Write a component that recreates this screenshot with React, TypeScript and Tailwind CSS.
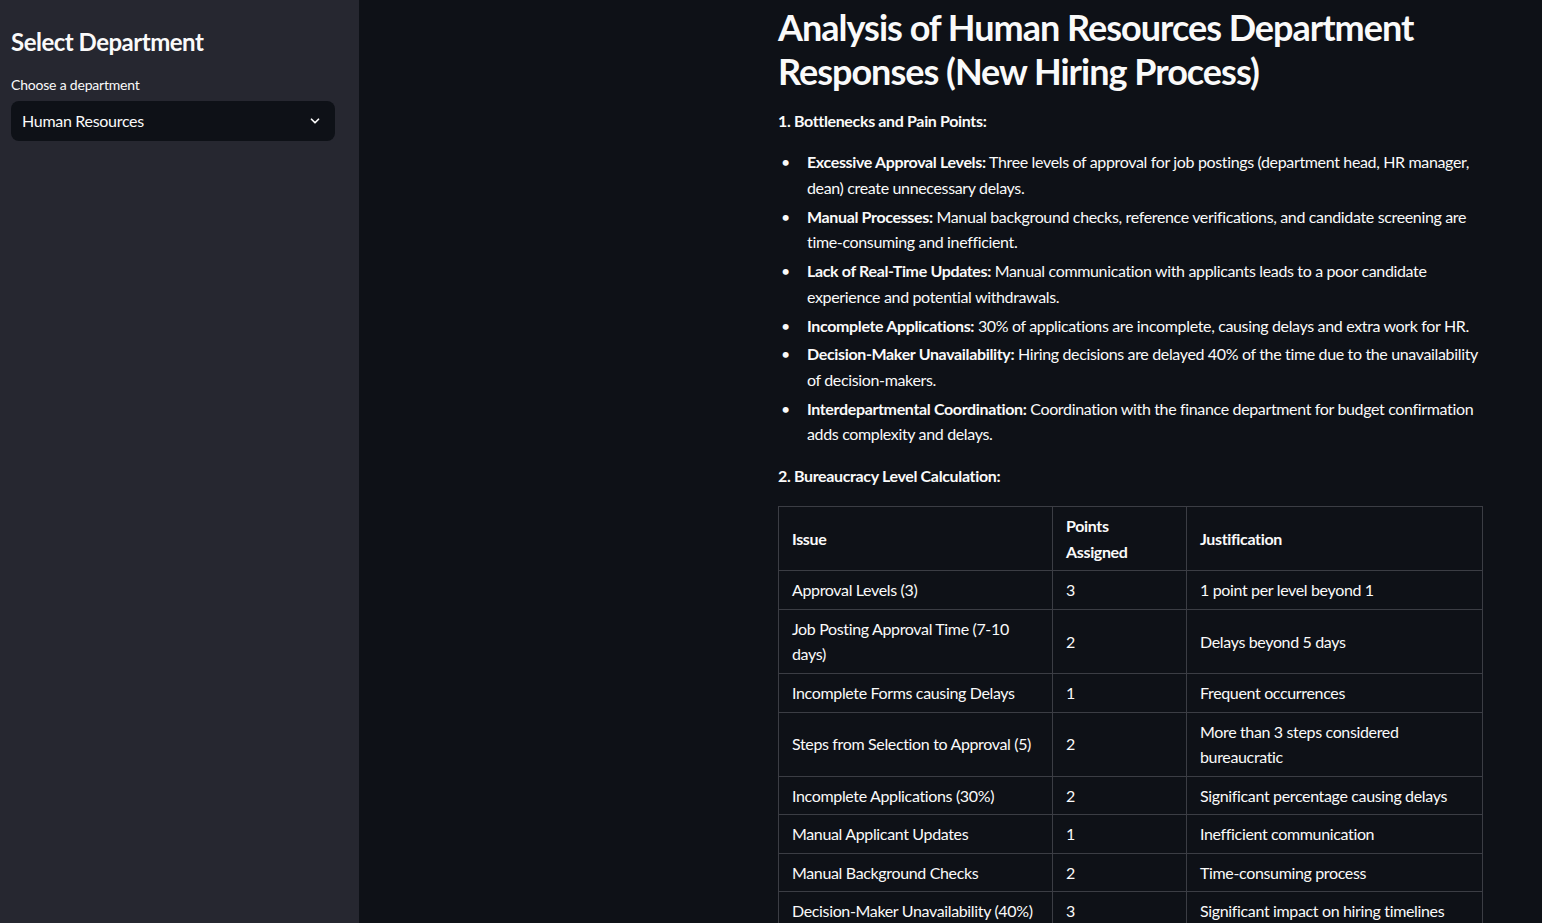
import React from 'react';

const FONT = { fontFamily: '"Lato", "Liberation Sans", sans-serif' };

const painPoints: { title: string; text: string }[] = [
  { title: 'Excessive Approval Levels:', text: 'Three levels of approval for job postings (department head, HR manager, dean) create unnecessary delays.' },
  { title: 'Manual Processes:', text: 'Manual background checks, reference verifications, and candidate screening are time-consuming and inefficient.' },
  { title: 'Lack of Real-Time Updates:', text: 'Manual communication with applicants leads to a poor candidate experience and potential withdrawals.' },
  { title: 'Incomplete Applications:', text: '30% of applications are incomplete, causing delays and extra work for HR.' },
  { title: 'Decision-Maker Unavailability:', text: 'Hiring decisions are delayed 40% of the time due to the unavailability of decision-makers.' },
  { title: 'Interdepartmental Coordination:', text: 'Coordination with the finance department for budget confirmation adds complexity and delays.' },
];

const rows: [string, string, string][] = [
  ['Approval Levels (3)', '3', '1 point per level beyond 1'],
  ['Job Posting Approval Time (7-10 days)', '2', 'Delays beyond 5 days'],
  ['Incomplete Forms causing Delays', '1', 'Frequent occurrences'],
  ['Steps from Selection to Approval (5)', '2', 'More than 3 steps considered bureaucratic'],
  ['Incomplete Applications (30%)', '2', 'Significant percentage causing delays'],
  ['Manual Applicant Updates', '1', 'Inefficient communication'],
  ['Manual Background Checks', '2', 'Time-consuming process'],
  ['Decision-Maker Unavailability (40%)', '3', 'Significant impact on hiring timelines'],
];

const cell = 'border border-[#3b3d44] px-[13px] py-[6px] align-middle';

const Sidebar: React.FC = () => (
  <aside className="w-[359px] shrink-0 bg-[#262730] px-[11px] pt-[24px]">
    <h2 className="text-[24px] font-bold leading-[36px] tracking-[-0.5px] text-[#fafafa]">Select Department</h2>
    <label className="mt-[16px] block text-[14px] leading-[18px] tracking-[-0.2px] text-[#fafafa]">Choose a department</label>
    <div className="mt-[7px] flex h-[40px] w-[324px] items-center justify-between rounded-lg bg-[#0e1117] pl-[11px] pr-[13px]">
      <span className="text-[16px] tracking-[-0.3px] text-[#fafafa]">Human Resources</span>
      <svg width="14" height="14" viewBox="0 0 24 24" fill="none" stroke="#fafafa" strokeWidth="3" strokeLinecap="round" strokeLinejoin="round">
        <path d="M6 9l6 6 6-6" />
      </svg>
    </div>
  </aside>
);

const App: React.FC = () => (
  <div className="flex h-[923px] overflow-hidden bg-[#0e1117] text-[#fafafa]" style={FONT}>
    <Sidebar />
    <main className="flex-1 pl-[419px] pt-[6.4px]">
      <div className="w-[704px] text-[16px] leading-[25.6px] tracking-[-0.35px]">
        <h1 className="text-[36px] font-bold leading-[43.2px] tracking-[-1px]">
          Analysis of Human Resources Department Responses (New Hiring Process)
        </h1>
        <p className="mt-[15px] font-bold">1. Bottlenecks and Pain Points:</p>
        <ul className="mt-[16px] flex flex-col gap-[3.2px]">
          {painPoints.map((p) => (
            <li key={p.title} className="flex">
              <span className="w-[29px] shrink-0 pl-[3px]">•</span>
              <span>
                <span className="font-bold">{p.title}</span> {p.text}
              </span>
            </li>
          ))}
        </ul>
        <p className="mt-[16.5px] font-bold">2. Bureaucracy Level Calculation:</p>
        <table className="mt-[17px] w-[704px] table-fixed border-collapse">
          <colgroup>
            <col className="w-[274px]" />
            <col className="w-[134px]" />
            <col className="w-[296px]" />
          </colgroup>
          <thead>
            <tr className="text-left font-bold">
              <th className={cell}>Issue</th>
              <th className={cell}>Points Assigned</th>
              <th className={cell}>Justification</th>
            </tr>
          </thead>
          <tbody>
            {rows.map(([a, b, c]) => (
              <tr key={a}>
                <td className={cell}>{a}</td>
                <td className={cell}>{b}</td>
                <td className={cell}>{c}</td>
              </tr>
            ))}
          </tbody>
        </table>
      </div>
    </main>
  </div>
);

export default App;
